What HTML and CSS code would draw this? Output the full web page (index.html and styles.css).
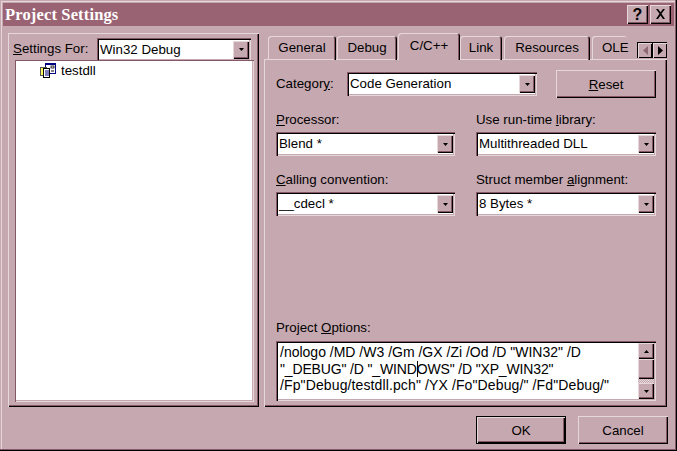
FILE: index.html
```html
<!DOCTYPE html>
<html lang="en">
<head>
<meta charset="utf-8">
<title>Project Settings</title>
<link rel="stylesheet" href="styles.css">
</head>
<body>
<div class="window">
  <div class="titlebar">
    <span class="title">Project Settings</span>
    <div class="title-buttons">
      <span class="capbtn help">?</span>
      <span class="capbtn close"><svg width="11" height="10" viewBox="0 0 11 10"><path d="M1 0h2l2.500 3.200L8 0h2L6.500 4.800 10 10H8L5.500 6.500 3 10H1l3.500-5.200z" fill="#000"/></svg></span>
    </div>
  </div>
  <div class="body">
    <section class="left">
      <div class="settings-row">
        <span class="label settings-label"><u>S</u>ettings For:</span>
        <div class="combo settings-combo"><span class="combo-text">Win32 Debug</span><span class="drop"><svg width="5" height="3" viewBox="0 0 5 3"><path d="M0 0h5L2.500 3z"/></svg></span></div>
      </div>
      <div class="tree">
        <div class="tree-item">
          <svg class="tree-icon" width="16" height="15" viewBox="0 0 16 15">
            <rect x="5.500" y="0.500" width="10" height="10" fill="#fff" stroke="#000080"/>
            <rect x="5" y="0" width="11" height="2" fill="#000080"/>
            <rect x="11" y="3" width="3" height="2" fill="none" stroke="#000" stroke-width=".8"/>
            <rect x="11" y="7" width="3" height="2" fill="#808080"/>
            <rect x="0.500" y="4.500" width="6" height="8" fill="#ffff60" stroke="#555"/>
            <rect x="3.500" y="5.500" width="6" height="9" fill="#fff" stroke="#000"/>
            <path d="M5 8h4M5 10h4M5 12h4" stroke="#000080"/>
          </svg>
          <span>testdll</span>
        </div>
      </div>
    </section>
    <section class="right">
      <div class="tabs">
        <span class="tab w-general">General</span>
        <span class="tab w-debug">Debug</span>
        <span class="tab active">C/C++</span>
        <span class="tab w-link">Link</span>
        <span class="tab w-res">Resources</span>
        <span class="tab w-ole">OLE</span>
        <div class="spinner">
          <span class="spin"><svg width="5" height="9" viewBox="0 0 5 9"><path d="M5 0v9L0 4.500z" fill="#8f6a75"/></svg></span>
          <span class="spin"><svg width="5" height="9" viewBox="0 0 5 9"><path d="M0 0v9l5-4.500z"/></svg></span>
        </div>
      </div>
      <div class="page">
        <div class="category-row">
          <span class="label category-label">Categor<u>y</u>:</span>
          <div class="combo category-combo"><span class="combo-text">Code Generation</span><span class="drop"><svg width="5" height="3" viewBox="0 0 5 3"><path d="M0 0h5L2.500 3z"/></svg></span></div>
          <span class="button reset"><span><u>R</u>eset</span></span>
        </div>
        <div class="fields">
          <div class="field">
            <span class="label"><u>P</u>rocessor:</span>
            <div class="combo"><span class="combo-text">Blend *</span><span class="drop"><svg width="5" height="3" viewBox="0 0 5 3"><path d="M0 0h5L2.500 3z"/></svg></span></div>
          </div>
          <div class="field">
            <span class="label">Use run-time <u>l</u>ibrary:</span>
            <div class="combo"><span class="combo-text">Multithreaded DLL</span><span class="drop"><svg width="5" height="3" viewBox="0 0 5 3"><path d="M0 0h5L2.500 3z"/></svg></span></div>
          </div>
          <div class="field">
            <span class="label"><u>C</u>alling convention:</span>
            <div class="combo"><span class="combo-text">__cdecl *</span><span class="drop"><svg width="5" height="3" viewBox="0 0 5 3"><path d="M0 0h5L2.500 3z"/></svg></span></div>
          </div>
          <div class="field">
            <span class="label">Struct member <u>a</u>lignment:</span>
            <div class="combo"><span class="combo-text">8 Bytes *</span><span class="drop"><svg width="5" height="3" viewBox="0 0 5 3"><path d="M0 0h5L2.500 3z"/></svg></span></div>
          </div>
        </div>
        <div class="options">
          <span class="label">Project <u>O</u>ptions:</span>
          <div class="optbox">
            <div class="opttext"><div>/nologo /MD /W3 /Gm /GX /Zi /Od /D "WIN32" /D</div><div class="line-tight">"_DEBUG" /D "_WIND<span class="caret"></span>OWS" /D "XP_WIN32"</div><div class="line-wide">/Fp"Debug/testdll.pch" /YX /Fo"Debug/" /Fd"Debug/"</div></div>
            <div class="scrollbar">
              <span class="sb-btn"><svg width="5" height="3" viewBox="0 0 5 3"><path d="M0 3h5L2.500 0z"/></svg></span>
              <span class="sb-thumb"></span>
              <span class="sb-track"></span>
              <span class="sb-btn"><svg width="5" height="3" viewBox="0 0 5 3"><path d="M0 0h5L2.500 3z"/></svg></span>
            </div>
          </div>
        </div>
      </div>
    </section>
  </div>
  <div class="footer">
    <span class="button default"><span>OK</span></span>
    <span class="button"><span>Cancel</span></span>
  </div>
</div>
</body>
</html>
```
FILE: styles.css
```css
:root {
  --face: #c6a8b0;
  --light: #e6d7db;
  --mid: #845866;
  --title: #9a6373;
}
* { box-sizing: border-box; }
html, body { margin: 0; padding: 0; }
body {
  width: 677px;
  height: 451px;
  overflow: hidden;
  font-family: "Liberation Sans", Arial, sans-serif;
  font-size: 13.3px;
  color: #000;
  background: var(--face);
}
svg { display: block; }
.window {
  width: 677px;
  height: 451px;
  padding: 3px 3px 2px;
  background: var(--face);
  box-shadow: inset -1px -1px 0 #000, inset -2px -2px 0 var(--mid), inset 1px 1px 0 var(--face), inset 2px 2px 0 var(--light);
  display: flex;
  flex-direction: column;
}
.titlebar {
  height: 23px;
  flex: none;
  background: var(--title);
  color: #fff;
  display: flex;
  align-items: center;
  justify-content: space-between;
  padding: 0 3px 0 2px;
}
.title {
  font-family: "Liberation Serif", "Times New Roman", serif;
  font-weight: bold;
  font-size: 16.5px;
  letter-spacing: 0.15px;
}
.title-buttons { display: flex; gap: 2px; margin-top: -1px; }
.capbtn {
  width: 21px;
  height: 19px;
  background: var(--face);
  box-shadow: inset 1px 1px 0 var(--light), inset -1px -1px 0 #000, inset -2px -2px 0 var(--mid);
  color: #000;
  font-weight: bold;
  font-size: 16px;
  line-height: 19px;
  text-align: center;
  display: flex;
  align-items: center;
  justify-content: center;
}
.body {
  flex: none;
  display: flex;
  gap: 5px;
  padding: 7px 6px 0 5px;
  height: 381px;
}
.left {
  width: 251px;
  height: 374px;
  padding: 5px 5px 5px 7px;
  display: flex;
  flex-direction: column;
  box-shadow: inset 1px 1px 0 var(--light), inset -1px -1px 0 #000, inset -2px -2px 0 var(--mid);
}
.settings-row {
  display: flex;
  align-items: center;
  justify-content: space-between;
  height: 22px;
  flex: none;
  padding-right: 3px;
}
.settings-label { margin-left: -2px; }
.label { white-space: nowrap; display: block; line-height: 16px; }
.combo {
  height: 24px;
  background: #fff;
  display: flex;
  align-items: center;
  padding: 3px 2px 3px 3px;
  box-shadow: inset 1px 1px 0 var(--mid), inset 2px 2px 0 #000, inset -1px -1px 0 var(--light), inset -2px -2px 0 var(--face);
}
.combo-text { flex: 1; white-space: nowrap; line-height: 16px; }
.drop {
  width: 16px;
  height: 18px;
  flex: none;
  background: var(--face);
  display: flex;
  align-items: center;
  justify-content: center;
  box-shadow: inset 1px 1px 0 var(--light), inset -1px -1px 0 #000, inset -2px -2px 0 var(--mid);
}
.settings-combo { width: 154px; height: 23px; margin-top: 1px; }
.tree {
  flex: 1;
  background: #fff;
  padding: 2px 0 0 25px;
  box-shadow: inset 1px 1px 0 var(--mid), inset -1px -1px 0 var(--light), inset -2px -2px 0 var(--face);
}
.tree-item { display: flex; align-items: center; gap: 5px; height: 17px; }
.right { width: 403px; height: 374px; display: flex; flex-direction: column; }
.tabs {
  display: flex;
  align-items: flex-end;
  height: 27px;
  flex: none;
  padding-left: 4px;
  position: relative;
  z-index: 1;
  margin-bottom: -1px;
}
.tab {
  height: 24px;
  margin-left: 1px;
  padding-top: 4px;
  text-align: center;
  line-height: 16px;
  box-shadow: inset 1px 1px 0 var(--light), inset -1px 0 0 #000, inset -2px 0 0 var(--mid);
  border-radius: 3px 3px 0 0;
  white-space: nowrap;
}
.w-general { width: 68px; margin-left: 0; }
.w-debug { width: 60px; }
.active {
  width: 62px;
  height: 27px;
  padding-top: 5px;
  background: var(--face);
  box-shadow: inset 1px 1px 0 var(--light), inset -1px 0 0 #000, inset -2px 0 0 var(--mid);
}
.w-link { width: 42px; margin-left: 0; }
.w-res { width: 86px; margin-left: 2px; }
.w-ole { width: 35px; margin-left: 2px; box-shadow: inset 1px 1px 0 var(--light); text-align: left; padding-left: 10px; }
.spinner { display: flex; margin-left: auto; margin-bottom: 2px; }
.spin {
  width: 15px;
  height: 16px;
  background: var(--face);
  display: flex;
  align-items: center;
  justify-content: center;
  box-shadow: inset 1px 1px 0 var(--light), inset -1px -1px 0 #000;
  border-top: 1px solid #000;
  border-left: 1px solid #000;
}
.page {
  flex: 1;
  padding: 11px 11px 0 12px;
  box-shadow: inset 1px 1px 0 var(--light), inset -1px -1px 0 #000, inset -2px -2px 0 var(--mid);
  display: flex;
  flex-direction: column;
}
.category-row { display: flex; align-items: center; height: 28px; flex: none; }
.category-label { width: 71px; }
.category-combo { width: 190px; }
.button {
  width: 90px;
  height: 28px;
  flex: none;
  display: flex;
  align-items: center;
  justify-content: center;
  background: var(--face);
  box-shadow: inset 1px 1px 0 var(--light), inset -1px -1px 0 #000, inset -2px -2px 0 var(--mid);
}
.reset { width: 100px; margin-left: 19px; }
.fields {
  display: grid;
  grid-template-columns: 179px 180px;
  column-gap: 21px;
  row-gap: 16px;
  margin-top: 14px;
  flex: none;
}
.field .label { margin-bottom: 4px; height: 16px; }
.options { margin-top: 104px; }
.options .label { margin-bottom: 5px; }
.optbox {
  width: 380px;
  height: 60px;
  background: #fff;
  display: flex;
  padding: 2px 2px 2px 3px;
  box-shadow: inset 1px 1px 0 var(--mid), inset 2px 2px 0 #000, inset -1px -1px 0 var(--light), inset -2px -2px 0 var(--face);
}
.opttext { flex: 1; padding: 1px 0 0 1px; font-size: 14px; line-height: 16.500px; white-space: nowrap; }
.line-tight { letter-spacing: -0.15px; }
.line-wide { letter-spacing: 0.12px; }
.caret { display: inline-block; width: 0; height: 16px; border-left: 1px solid #000; margin-right: -1px; vertical-align: top; }
.scrollbar { width: 16px; flex: none; display: flex; flex-direction: column; }
.sb-btn {
  height: 16px;
  flex: none;
  background: var(--face);
  display: flex;
  align-items: center;
  justify-content: center;
  box-shadow: inset 1px 1px 0 var(--light), inset -1px -1px 0 #000, inset -2px -2px 0 var(--mid);
}
.sb-thumb {
  height: 20px;
  flex: none;
  background: var(--face);
  box-shadow: inset 1px 1px 0 var(--light), inset -1px -1px 0 #000, inset -2px -2px 0 var(--mid);
}
.sb-track {
  flex: 1;
  background-color: var(--face);
  background-image: repeating-conic-gradient(var(--light) 0 25%, var(--face) 0 50%);
  background-size: 2px 2px;
}
.footer {
  display: flex;
  justify-content: flex-end;
  gap: 12px;
  padding: 9px 6px 0 0;
}
.default { box-shadow: inset 0 0 0 1px #000, inset 2px 2px 0 var(--light), inset -2px -2px 0 #000, inset -3px -3px 0 var(--mid); }
```
